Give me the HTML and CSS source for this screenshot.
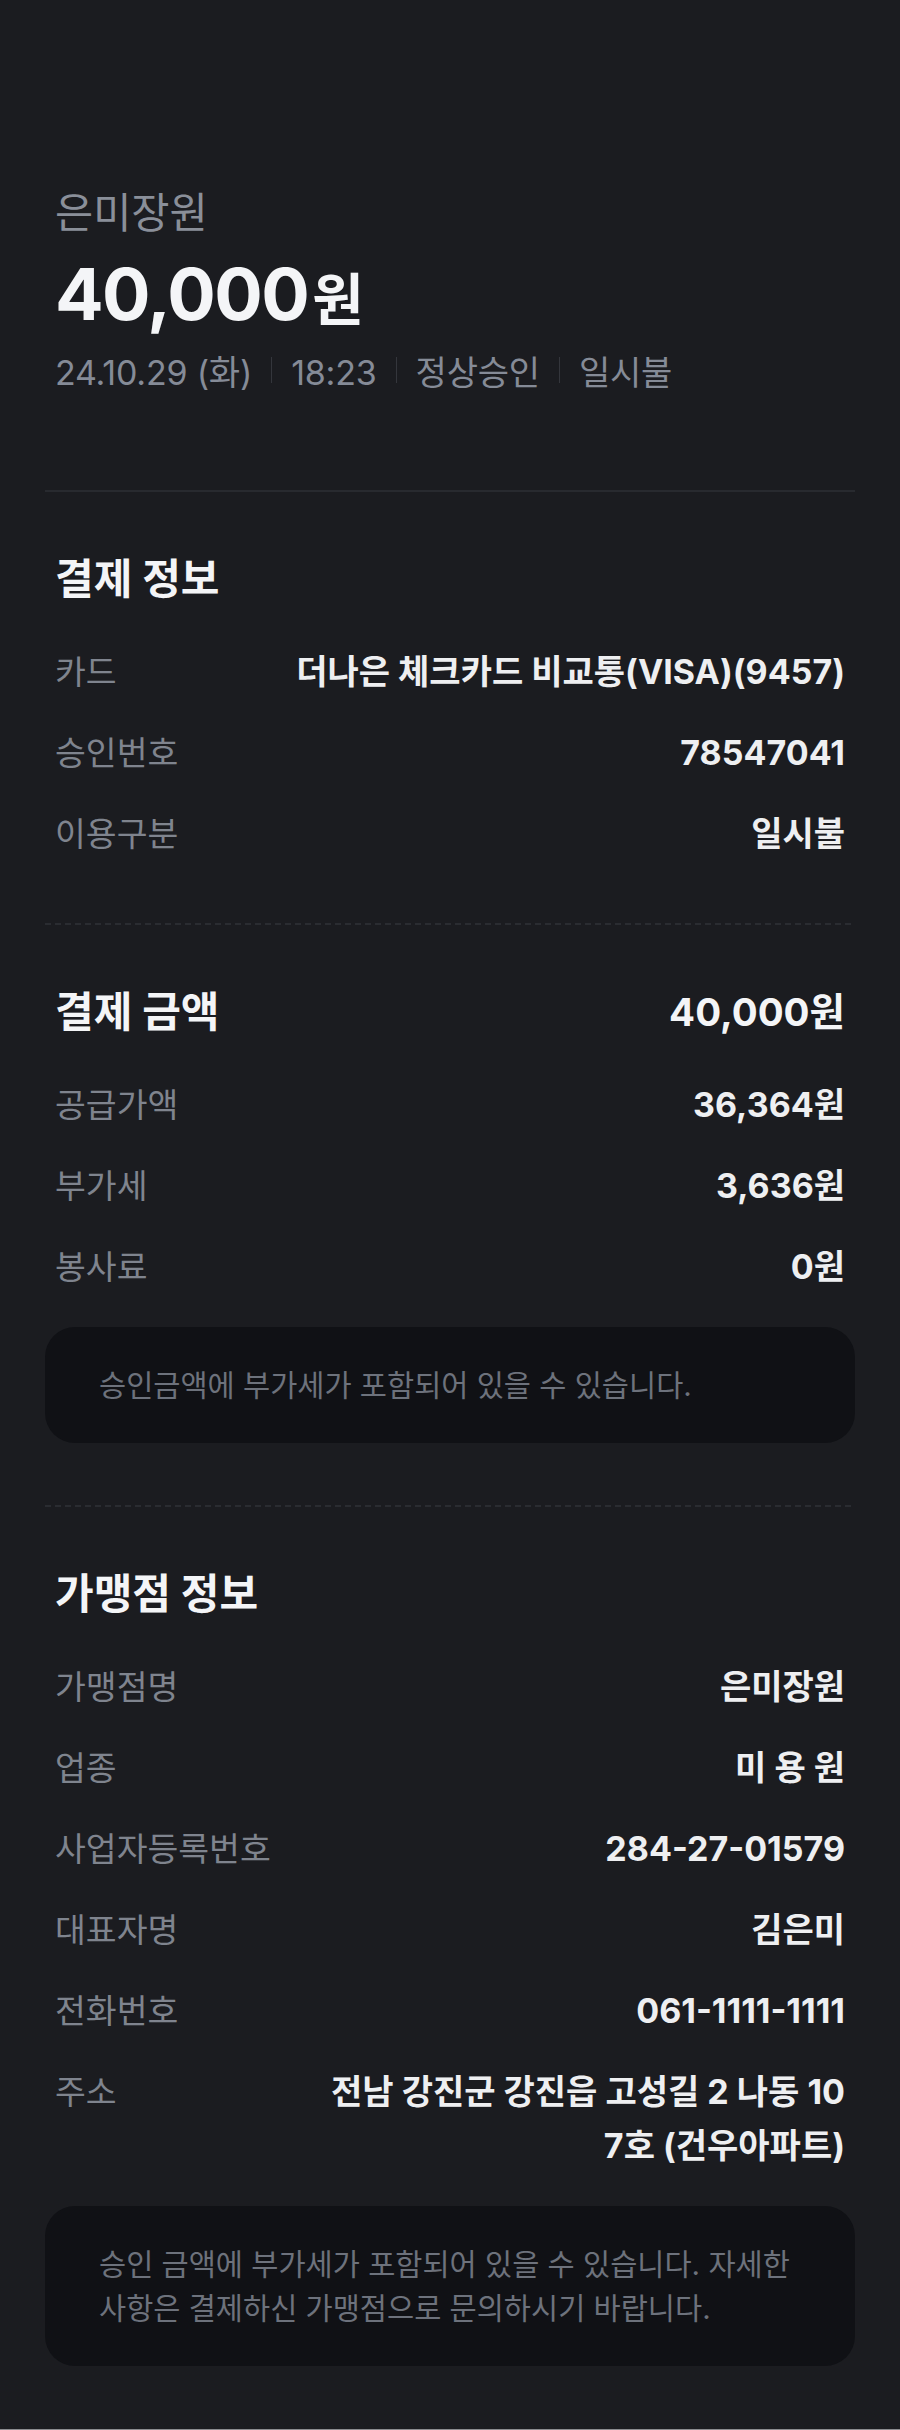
FILE: index.html
```html
<!DOCTYPE html>
<html lang="ko">
<head>
<meta charset="utf-8">
<title>결제 상세</title>
<link rel="stylesheet" href="styles.css">
</head>
<body>
<main class="page">
  <header class="summary">
    <div class="store">은미장원</div>
    <div class="amount"><span class="num">40,000</span><span class="unit">원</span></div>
    <div class="meta">
      <span class="meta-item">24.10.29 (화)</span>
      <span class="sep"></span>
      <span class="meta-item">18:23</span>
      <span class="sep"></span>
      <span class="meta-item">정상승인</span>
      <span class="sep"></span>
      <span class="meta-item">일시불</span>
    </div>
  </header>

  <div class="divider"></div>

  <section class="section">
    <h2 class="section-title">결제 정보</h2>
    <div class="rows">
      <div class="row"><span class="label">카드</span><span class="value">더나은 체크카드 비교통(VISA)(9457)</span></div>
      <div class="row"><span class="label">승인번호</span><span class="value">78547041</span></div>
      <div class="row"><span class="label">이용구분</span><span class="value">일시불</span></div>
    </div>
  </section>

  <div class="divider dashed"></div>

  <section class="section">
    <div class="title-row">
      <h2 class="section-title">결제 금액</h2>
      <span class="total">40,000원</span>
    </div>
    <div class="rows">
      <div class="row"><span class="label">공급가액</span><span class="value">36,364원</span></div>
      <div class="row"><span class="label">부가세</span><span class="value">3,636원</span></div>
      <div class="row"><span class="label">봉사료</span><span class="value">0원</span></div>
    </div>
    <p class="note">승인금액에 부가세가 포함되어 있을 수 있습니다.</p>
  </section>

  <div class="divider dashed"></div>

  <section class="section">
    <h2 class="section-title">가맹점 정보</h2>
    <div class="rows">
      <div class="row"><span class="label">가맹점명</span><span class="value">은미장원</span></div>
      <div class="row"><span class="label">업종</span><span class="value">미 용 원</span></div>
      <div class="row"><span class="label">사업자등록번호</span><span class="value">284-27-01579</span></div>
      <div class="row"><span class="label">대표자명</span><span class="value">김은미</span></div>
      <div class="row"><span class="label">전화번호</span><span class="value">061-1111-1111</span></div>
      <div class="row"><span class="label">주소</span><span class="value address">전남 강진군 강진읍 고성길 2 나동 107호 (건우아파트)</span></div>
    </div>
    <p class="note">승인 금액에 부가세가 포함되어 있을 수 있습니다. 자세한 사항은 결제하신 가맹점으로 문의하시기 바랍니다.</p>
  </section>
</main>
</body>
</html>
```

FILE: styles.css
```css
html, body {
  margin: 0;
  padding: 0;
  background: #1b1c20;
}

body {
  font-family: "Inter", "Noto Sans CJK KR", sans-serif;
  color: #eeeff1;
}

.page {
  box-sizing: border-box;
  min-height: 2430px;
  padding: 0 45px;
  border-bottom: 1px solid #8b8c90;
}

.summary {
  padding: 190px 10px 0;
}

.store {
  font-size: 41.5px;
  line-height: 46px;
  color: #8a8f99;
}

.amount {
  margin-top: 15px;
  height: 86px;
  display: flex;
  align-items: baseline;
  font-weight: 700;
  color: #f4f5f7;
}

.amount .num {
  font-size: 72px;
  line-height: 86px;
  letter-spacing: -1.6px;
}

.amount .unit {
  font-size: 56px;
  margin-left: 4px;
}

.meta {
  margin-top: 17px;
  display: flex;
  align-items: center;
  gap: 19px;
  font-size: 34px;
  line-height: 38px;
  color: #858b97;
  letter-spacing: -0.2px;
}

.sep {
  width: 1px;
  height: 26px;
  background: #34363c;
  margin-top: -6px;
}

.divider {
  height: 2px;
  background: #282a2f;
  margin-top: 98px;
}

.divider.dashed {
  background: repeating-linear-gradient(90deg, #2a2c31 0 6px, transparent 6px 10px);
  margin-top: 62px;
}

.section {
  padding: 63px 10px 0;
}

.section-title {
  margin: 0;
  font-size: 42px;
  line-height: 48px;
  font-weight: 700;
  color: #f4f5f7;
}

.title-row {
  display: flex;
  justify-content: space-between;
  align-items: center;
}

.total {
  font-size: 38.5px;
  line-height: 48px;
  font-weight: 700;
  color: #f4f5f7;
}

.rows {
  margin-top: 42px;
  display: flex;
  flex-direction: column;
  gap: 27px;
}

.row {
  display: flex;
  justify-content: space-between;
  align-items: flex-start;
  line-height: 54px;
}

.label {
  flex-shrink: 0;
  font-size: 33.5px;
  color: #7f848e;
}

.value {
  text-align: right;
  font-size: 34px;
  font-weight: 700;
  color: #eeeff1;
}

.value.address {
  max-width: 522px;
  word-break: break-all;
}

.note {
  margin: 33px -10px 0;
  padding: 36px 54px;
  background: #101115;
  border-radius: 30px;
  font-size: 29.5px;
  line-height: 44px;
  color: #6d727c;
}
```
